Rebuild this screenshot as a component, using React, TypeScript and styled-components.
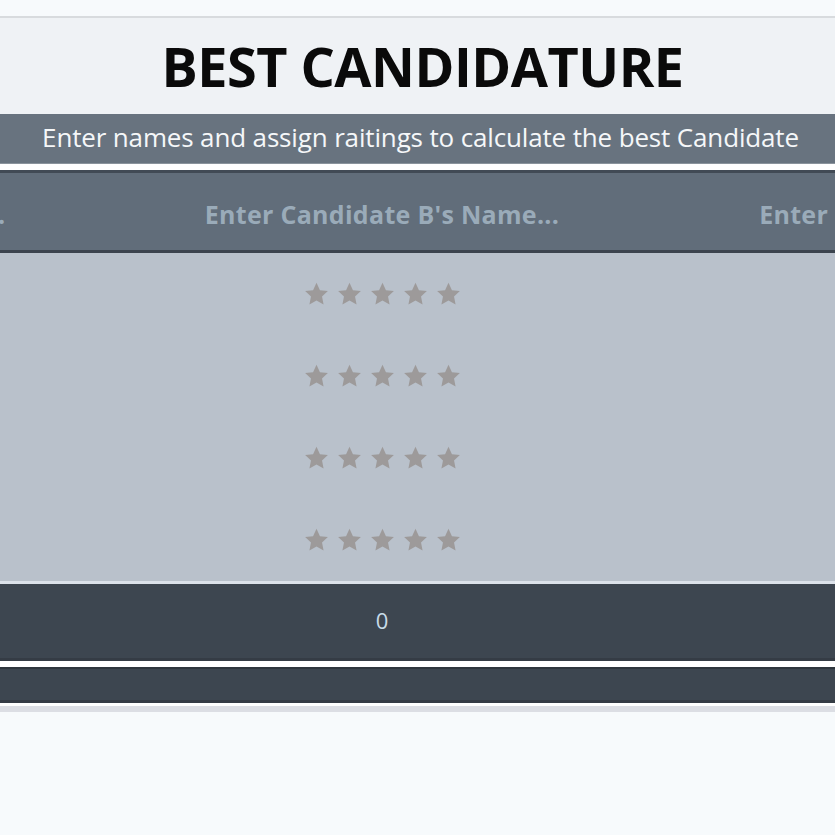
import React from "react";
import styled, { createGlobalStyle } from "styled-components";

const GlobalStyle = createGlobalStyle`
  *, *::before, *::after {
    box-sizing: border-box;
  }

  html, body {
    margin: 0;
    padding: 0;
    background: #f7fafc;
    font-family: "Open Sans", "Noto Sans", sans-serif;
  }
`;

const Page = styled.div`
  width: 835px;
  height: 835px;
  overflow: hidden;
  padding-top: 16px;
`;

const Sheet = styled.main`
  border-top: 2px solid #d8dbde;
  border-bottom: 6px solid #dcdee4;
  padding-bottom: 3px;
  background: #ffffff;
`;

const TitleBar = styled.header`
  height: 96px;
  background: #eff2f5;
  display: flex;
  align-items: center;
  justify-content: center;
  padding-left: 10px;

  > h1 {
    margin: 0;
    font-size: 54px;
    font-weight: 700;
    letter-spacing: -0.5px;
    color: #0a0a0a;
  }
`;

const Subtitle = styled.p`
  margin: 0;
  height: 50px;
  background: #68737f;
  border-bottom: 1px solid #8a939c;
  color: #f5f7f9;
  font-size: 26px;
  display: flex;
  align-items: center;
  justify-content: center;
  padding: 0 0 3px 6px;
  letter-spacing: -0.15px;
  white-space: nowrap;
`;

const Gap = styled.div`
  height: 6px;
  background: #ffffff;
`;

const Grid = styled.div`
  display: grid;
  grid-template-columns: repeat(3, 554px);
  margin-left: -449px;
  width: 1662px;
`;

const HeadCell = styled.div`
  height: 83px;
  background: #616d7a;
  border-top: 3px solid #414a55;
  border-bottom: 3px solid #3c444e;
  display: flex;
  align-items: center;
  justify-content: center;
  color: #9aabb9;
  font-size: 25px;
  font-weight: 700;
  letter-spacing: 0.3px;
  padding-top: 5px;
  white-space: nowrap;
`;

const BodyCell = styled.div`
  background: #b9c1cb;
  display: flex;
  flex-direction: column;
  border-bottom: 3px solid #dce2ea;
`;

const StarRow = styled.div`
  height: 82px;
  display: flex;
  align-items: center;
  justify-content: center;
  gap: 8px;
`;

const TotalCell = styled.div<{ $slim?: boolean }>`
  height: ${(p) => (p.$slim ? 36 : 77)}px;
  background: #3d4650;
  border-top: ${(p) => (p.$slim ? "2px solid #2f363e" : "none")};
  border-bottom: 3px solid #353c45;
  display: flex;
  align-items: center;
  justify-content: center;
  color: #c8dbe8;
  font-size: 22px;
  padding-bottom: 2px;
`;

const Star = () => (
  <svg width="25" height="24" viewBox="0 0 24 23">
    <path
      d="M12 0.8l3.3 7 7.6 0.9-5.6 5.2 1.5 7.6L12 17.7l-6.8 3.8 1.5-7.6L1.1 8.7l7.6-0.9z"
      fill="#9d9a9a"
    />
  </svg>
);

const criteria = [0, 1, 2, 3];
const candidates = ["A", "B", "C"];

const App = () => {
  return (
    <Page>
      <GlobalStyle />
      <Sheet>
        <TitleBar>
          <h1>BEST CANDIDATURE</h1>
        </TitleBar>
        <Subtitle>Enter names and assign raitings to calculate the best Candidate</Subtitle>
        <Gap />
        <Grid>
          {candidates.map((c) => (
            <HeadCell key={c}>Enter Candidate {c}'s Name...</HeadCell>
          ))}
          {candidates.map((c) => (
            <BodyCell key={c}>
              {criteria.map((i) => (
                <StarRow key={i}>
                  {[0, 1, 2, 3, 4].map((s) => (
                    <Star key={s} />
                  ))}
                </StarRow>
              ))}
            </BodyCell>
          ))}
          {candidates.map((c) => (
            <TotalCell key={c}>0</TotalCell>
          ))}
        </Grid>
        <Gap />
        <Grid>
          {candidates.map((c) => (
            <TotalCell key={c} $slim />
          ))}
        </Grid>
      </Sheet>
    </Page>
  );
};

export default App;
